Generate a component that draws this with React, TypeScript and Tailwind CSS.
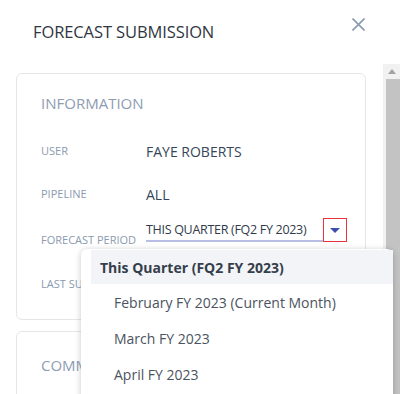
import React, { useState } from "react";

const periodOptions = [
  "This Quarter (FQ2 FY 2023)",
  "February FY 2023 (Current Month)",
  "March FY 2023",
  "April FY 2023",
];

const InfoRow: React.FC<{ label: string; className?: string; children?: React.ReactNode }> = ({
  label,
  className = "",
  children,
}) => (
  <div className={`flex items-center ${className}`}>
    <div className="w-[105px] shrink-0 text-[11px] text-[#8a9ab0] uppercase">{label}</div>
    <div className="flex-1 text-[14px] text-[#36465a]">{children}</div>
  </div>
);

const App: React.FC = () => {
  const [selected, setSelected] = useState(0);
  const [open, setOpen] = useState(true);

  return (
    <div
      className="w-[400px] h-[394px] bg-white flex overflow-hidden relative"
      style={{ fontFamily: '"Open Sans", "Liberation Sans", sans-serif' }}
    >
      {/* modal body */}
      <div className="w-[383px] shrink-0 pl-4">
        <div className="h-[73px] flex items-start justify-between pt-[20px] pl-[17px] pr-[18px]">
          <h1 className="text-[16.5px] text-[#30363f] tracking-[-0.1px]">FORECAST SUBMISSION</h1>
          <button className="mt-[-2px] text-[#8a9bb0]">
            <svg width="13" height="13" viewBox="0 0 13 13" stroke="currentColor" strokeWidth="1.6">
              <path d="M0.5 0.5 L12.5 12.5 M12.5 0.5 L0.5 12.5" />
            </svg>
          </button>
        </div>

        {/* information card */}
        <div className="w-[350px] h-[247px] border border-[#e4e6ea] rounded-md pl-[24px] pt-[18px]">
          <div className="text-[15px] text-[#8d9cb2] mb-[26px]">INFORMATION</div>
          <InfoRow label="User" className="h-[22px] mb-[21px]">
            FAYE ROBERTS
          </InfoRow>
          <InfoRow label="Pipeline" className="h-[22px] mb-[12px]">
            ALL
          </InfoRow>
          <div className="flex items-start h-[24px] mb-[32px]">
            <div className="w-[105px] shrink-0 text-[11px] leading-[16px] text-[#8a9ab0] pt-[14px]">
              FORECAST PERIOD
            </div>
            <div className="flex items-start">
              <div className="w-[177px] h-[24px] border-b-2 border-[#b7bde4] text-[12.5px] tracking-[-0.3px] text-[#2f3b4a] leading-[16px] pt-[4px]">
                {periodOptions[selected].toUpperCase()}
              </div>
              <button
                onClick={() => setOpen(!open)}
                className="w-[24px] h-[24px] border border-solid border-[#e5353b] flex items-center justify-center"
              >
                <svg width="10" height="5" viewBox="0 0 10 5" className="mt-[1px]">
                  <path d="M0 0 H10 L5 5 Z" fill="#3d4fae" />
                </svg>
              </button>
            </div>
          </div>
          <InfoRow label="Last Submitted" className="h-[22px]" />
        </div>

        {/* comments card */}
        <div className="w-[350px] h-[120px] mt-[11px] border border-[#e4e6ea] rounded-md pl-[24px] pt-[22px]">
          <div className="text-[15px] text-[#8d9cb2]">COMMENTS</div>
        </div>
      </div>

      {/* scrollbar */}
      <div className="w-[17px] mt-[64px] bg-[#f1f1f1] flex flex-col items-center">
        <svg width="8" height="5" viewBox="0 0 8 5" className="mt-[5px]">
          <path d="M0 5 H8 L4 0 Z" fill="#a3a3a3" />
        </svg>
        <div className="w-[14px] flex-1 mt-[5px] ml-[2px] bg-[#c3c3c3]" />
      </div>

      {/* period menu */}
      {open && (
        <div className="absolute left-[81px] top-[249px] w-[312px] h-[160px] bg-white rounded-md shadow-[0_1px_6px_rgba(0,0,0,0.22)] pl-[10px] pt-[1px]">
          {periodOptions.map((option, i) => (
            <button
              key={option}
              onClick={() => {
                setSelected(i);
                setOpen(false);
              }}
              className={`block w-full text-left text-[14px] ${
                i === 0 ? "h-[34px] pl-[9px] bg-[#f2f4f7] font-bold text-[#353e4b]" : "h-[36px] pl-[23px] text-[#4b5360]"
              }`}
            >
              {option}
            </button>
          ))}
        </div>
      )}
    </div>
  );
};

export default App;
